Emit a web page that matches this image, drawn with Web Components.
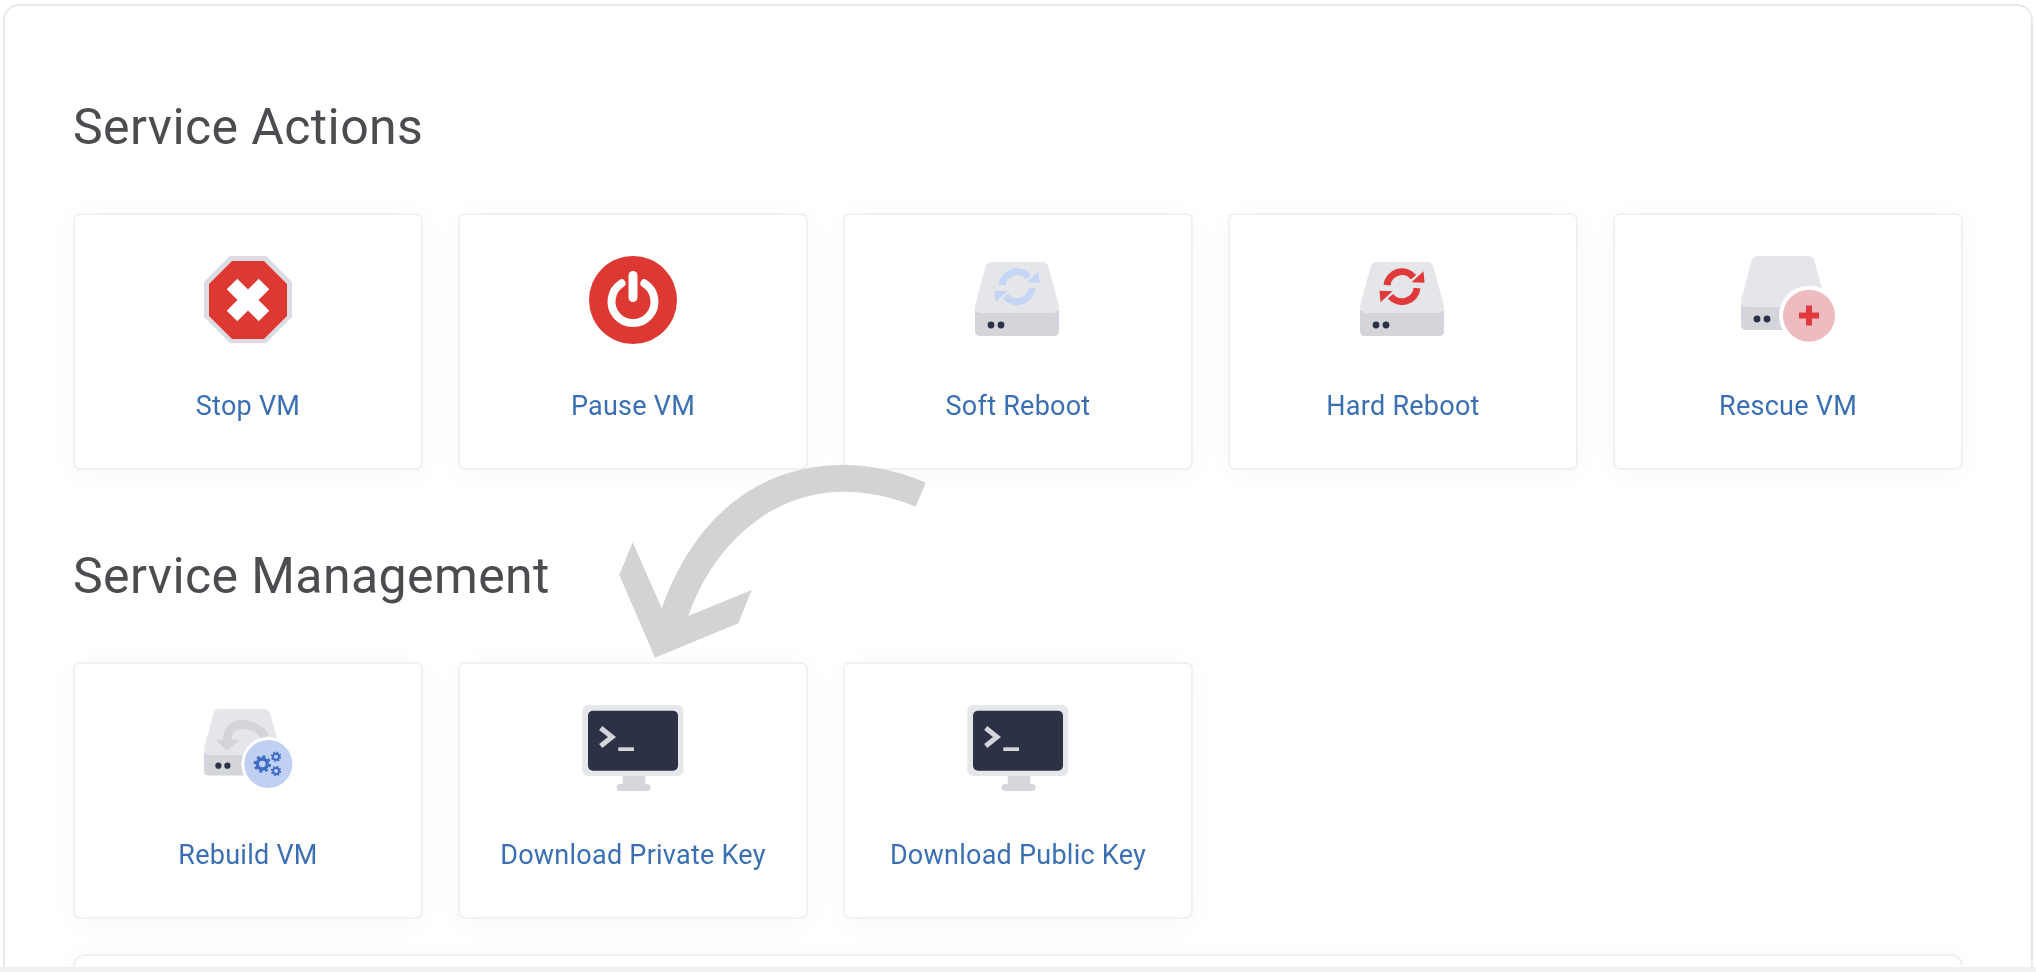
<!DOCTYPE html>
<html lang="en">
<head>
<meta charset="utf-8">
<title>Service Actions</title>
<style>
  html, body { margin: 0; padding: 0; height: 100%; background: #fff; overflow: hidden; }
</style>
</head>
<body>
<service-page>
  <service-section heading="Service Actions">
    <action-card label="Stop VM" icon="stop"></action-card>
    <action-card label="Pause VM" icon="pause"></action-card>
    <action-card label="Soft Reboot" icon="soft"></action-card>
    <action-card label="Hard Reboot" icon="hard"></action-card>
    <action-card label="Rescue VM" icon="rescue"></action-card>
  </service-section>
  <service-section heading="Service Management">
    <action-card label="Rebuild VM" icon="rebuild"></action-card>
    <action-card label="Download Private Key" icon="terminal"></action-card>
    <action-card label="Download Public Key" icon="terminal"></action-card>
  </service-section>
  <info-box></info-box>
</service-page>

<script>
const disk = `
  <path d="M37 60 H121 V81 Q121 86 116 86 H42 Q37 86 37 81 Z" fill="#d3d5da"/>
  <path d="M54 12 H104 Q109 12 110.500 17 L121 56 Q121 63 115 63 H43 Q37 63 37 56 L47.500 17 Q49 12 54 12 Z" fill="#e4e6ea"/>
  <circle cx="53" cy="75" r="3.400" fill="#2b3147"/>
  <circle cx="63" cy="75" r="3.400" fill="#2b3147"/>`

const refreshHalf = color => `
  <path d="M-15 -1.500 A15 15 0 0 1 11.500 -9.500" fill="none" stroke="${color}" stroke-width="7"/>
  <path d="M21.500 -15.500 L22.500 -4 L9.500 -4.500 Z"/>`

const refresh = (x, y, color) => `
  <g transform="translate(${x} ${y})" fill="${color}">
    ${refreshHalf(color)}
    <g transform="rotate(180)">${refreshHalf(color)}</g>
  </g>`

const gear = (x, y, r, w) => `
  <circle cx="${x}" cy="${y}" r="${r}" fill="none" stroke="#3f6bc4" stroke-width="${w}"/>
  <circle cx="${x}" cy="${y}" r="${r + w * 0.75}" fill="none" stroke="#3f6bc4" stroke-width="${w * 0.7}" stroke-dasharray="${(r + w * 0.75) * 0.4} ${(r + w * 0.75) * 0.385}"/>`

const terminal = `
  <path d="M69.700 76 H92.300 V86 H69.700 Z" fill="#d5d7dc"/>
  <rect x="63.700" y="85" width="34" height="7" rx="3.500" fill="#d5d7dc"/>
  <rect x="29.300" y="6" width="101" height="71" rx="6" fill="#e5e7eb"/>
  <rect x="35" y="11.700" width="90" height="60" rx="5" fill="#2c3145"/>
  <path d="M47.700 29 L59 38 L47.700 47" fill="none" stroke="#d3d5da" stroke-width="5"/>
  <rect x="65.300" y="48.300" width="15.700" height="3.700" fill="#d3d5da"/>`

const icons = {
  stop: `
    <path d="M62 6 H98 L124 32 V67 L98 93 H62 L36 67 V32 Z" fill="#dcdde2"/>
    <path d="M64 11 H96 L119 34 V66 L96 89 H64 L41 66 V34 Z" fill="#dd3831"/>
    <path d="M64 34 L96 66 M96 34 L64 66" stroke="#fff" stroke-width="15"/>`,
  pause: `
    <circle cx="80" cy="50" r="44" fill="#dd3831"/>
    <path d="M68.600 33.300 A21.500 21.500 0 1 0 91.400 33.300" fill="none" stroke="#fff" stroke-width="8" stroke-linecap="round"/>
    <path d="M80 25.500 V47.500" stroke="#fff" stroke-width="9" stroke-linecap="round"/>`,
  soft: disk + refresh(79, 36.700, '#c5d5f5'),
  hard: disk + refresh(79, 36.700, '#e13a3d'),
  rescue: `
    <g transform="translate(-4 -6)">${disk}</g>
    <circle cx="101" cy="65.700" r="30" fill="#fff"/>
    <circle cx="101" cy="65.700" r="26" fill="#eebcc0"/>
    <path d="M101 55.500 V75.500 M91 65.500 H111" stroke="#e1393d" stroke-width="6"/>`,
  rebuild: `
    <g transform="translate(2.700 -0.800) scale(0.9)">${disk.replace(/<circle[^>]*>/g, '')}</g>
    <circle cx="50.400" cy="66.700" r="3.100" fill="#2b3147"/>
    <circle cx="59.400" cy="66.700" r="3.100" fill="#2b3147"/>
    <path d="M97 38 C91 27 72 21 63 30 C60 33 59 37 59 43" fill="none" stroke="#d3d5da" stroke-width="9"/>
    <path d="M48 41 H71.300 L58.700 52 Z" fill="#d3d5da"/>
    <circle cx="100.300" cy="65" r="27" fill="#fff"/>
    <circle cx="100.300" cy="65" r="24" fill="#bfd0f2"/>
    ${gear(94.300, 65, 5, 3.400)}${gear(108, 57.700, 3, 2)}${gear(108, 72, 3, 2)}`,
  terminal
}

class ActionCard extends HTMLElement {
  constructor () {
    super()
    this.shadow = this.attachShadow({ mode: 'open' })
  }

  connectedCallback () {
    this.shadow.innerHTML = /* html */`
      <style>
        :host {
          display: flex;
          flex-direction: column;
          align-items: center;
          box-sizing: border-box;
          height: 257px;
          padding-top: 35px;
          background: #fff;
          border: 2px solid #f0f0f5;
          border-radius: 7px;
          box-shadow: 0 4px 30px rgba(40, 40, 70, 0.03);
        }
        svg { display: block; width: 160px; height: 100px; flex: none; }
        a {
          margin-top: 36px;
          font: 400 27px/40px Roboto, sans-serif;
          letter-spacing: 0.25px;
          color: #3a6fb3;
          text-decoration: none;
          white-space: nowrap;
        }
      </style>
      <svg viewBox="0 0 160 100">${icons[this.getAttribute('icon')]}</svg>
      <a href="#">${this.getAttribute('label')}</a>
    `
  }
}

class ServiceSection extends HTMLElement {
  constructor () {
    super()
    this.shadow = this.attachShadow({ mode: 'open' })
  }

  connectedCallback () {
    this.shadow.innerHTML = /* html */`
      <style>
        :host { display: block; }
        h2 {
          margin: 0 0 56px;
          font: 400 50px/60px Roboto, sans-serif;
          letter-spacing: 0.4px;
          color: #4a4c4f;
        }
        .grid {
          display: grid;
          grid-template-columns: repeat(5, 350px);
          gap: 35px;
        }
      </style>
      <h2>${this.getAttribute('heading')}</h2>
      <div class="grid"><slot></slot></div>
    `
  }
}

class InfoBox extends HTMLElement {
  constructor () {
    super()
    this.attachShadow({ mode: 'open' }).innerHTML = /* html */`
      <style>
        :host {
          display: block;
          height: 120px;
          margin-top: 35px;
          background: #fff;
          border: 2px solid #f0f0f5;
          border-radius: 12px;
          box-shadow: 0 4px 30px rgba(40, 40, 70, 0.03);
        }
      </style>
    `
  }
}

class ServicePage extends HTMLElement {
  constructor () {
    super()
    this.attachShadow({ mode: 'open' }).innerHTML = /* html */`
      <style>
        :host {
          display: flex;
          flex-direction: column;
          height: 972px;
          background: #fff;
        }
        .panel {
          position: relative;
          flex: 1;
          min-height: 0;
          margin: 4px 3px 0;
          padding: 91px 68px 0;
          overflow: hidden;
          background: #fff;
          border: 2px solid #e9e9e9;
          border-bottom: 0;
          border-radius: 16px 16px 0 0;
          filter: blur(0.45px);
        }
        ::slotted(service-section:nth-of-type(2)) { margin-top: 76px; }
        .arrow { position: absolute; left: -5px; top: -6px; width: 2036px; height: 972px; pointer-events: none; }
        .band { flex: none; height: 5px; background: #eef0f2; }
      </style>
      <div class="panel">
        <slot></slot>
        <svg class="arrow" viewBox="0 0 2036 972">
          <path fill="#d2d3d5" d="M925.700 482.700 C900 471 870 465 843.300 465 C760 465 695 515 661.700 608.300 L632.700 542.300 L619.300 575 L655 657.700 L738.300 623.300 L751.700 590 L688.300 616 C715 540 775 491.700 843.300 491.700 C868 491.700 893 497 915.700 506.700 Z"/>
        </svg>
      </div>
      <div class="band"></div>
    `
  }
}

customElements.define('action-card', ActionCard)
customElements.define('service-section', ServiceSection)
customElements.define('info-box', InfoBox)
customElements.define('service-page', ServicePage)
</script>
</body>
</html>
